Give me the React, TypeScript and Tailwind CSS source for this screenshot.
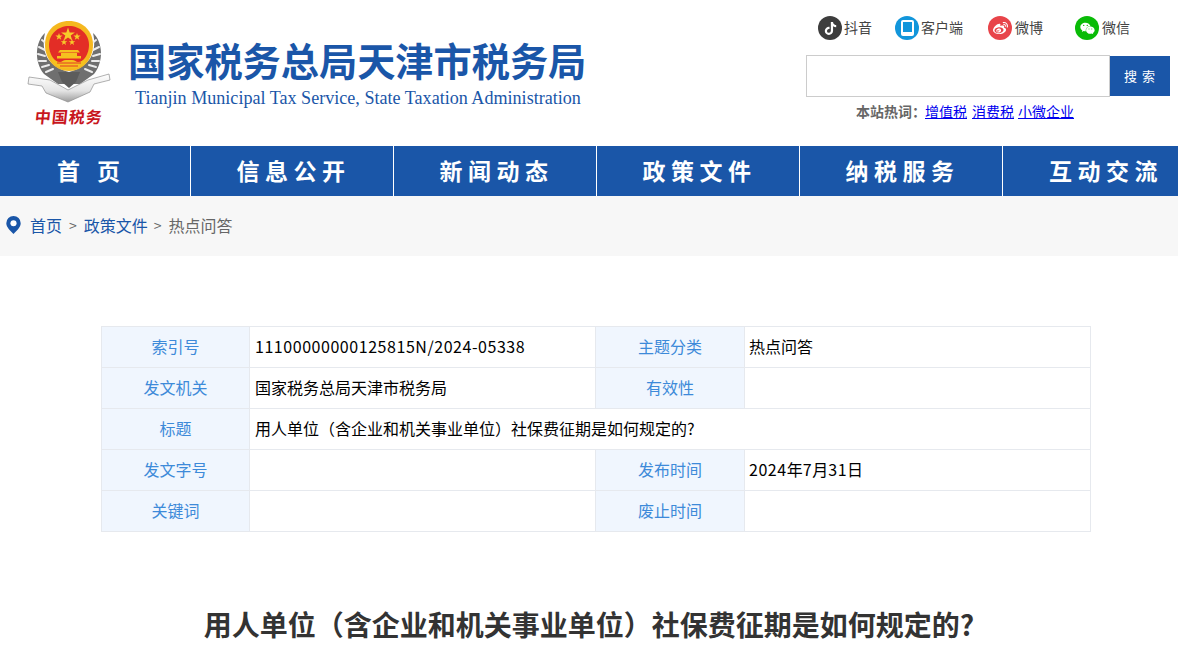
import React from "react";
import { FaTiktok, FaWeibo, FaWeixin } from "react-icons/fa";

const cjk = "font-['Microsoft_YaHei','Noto_Sans_CJK_SC',sans-serif]";

const navItems = ["信息公开", "新闻动态", "政策文件", "纳税服务", "互动交流"];

// coordinates in the viewBox are the picture's own, so the emblem parts are easy to compare
function Emblem() {
  return (
    <svg viewBox="26 21 86 82" className="w-[86px] h-[82px] shrink-0">
      <defs>
        <linearGradient id="silver" x1="0" y1="0" x2="0" y2="1">
          <stop offset="0" stopColor="#ffffff" />
          <stop offset="0.6" stopColor="#e4e4e4" />
          <stop offset="1" stopColor="#9c9c9c" />
        </linearGradient>
      </defs>
      {/* wreath */}
      <path d="M45 33 C35 42 34 62 44 74 L58 84 L80 84 L94 74 C104 62 103 42 93 33 C97 50 92 66 69 72 C46 66 41 50 45 33Z" fill="#6f6f6f" />
      <path d="M42 40 L47 44 M39 47 L45 50 M38 54 L45 56 M39 61 L46 61 M42 67 L49 65 M46 72 L53 69 M96 40 L91 44 M99 47 L93 50 M100 54 L93 56 M99 61 L92 61 M96 67 L89 65 M92 72 L85 69" stroke="#ececec" strokeWidth="2" strokeLinecap="round" />
      {/* ribbon */}
      <path d="M29 77 L50 80 L68 90 L88 80 L109 74 L110 80 L94 84 L90 92 L68 102 L46 93 L42 86 L28 84Z" fill="url(#silver)" stroke="#8f8f8f" strokeWidth="0.7" />
      {/* base under the shield */}
      <path d="M58 72 H80 L76 82 L69 88 L62 82Z" fill="#5c5c5c" />
      {/* shield */}
      <path d="M69 21 C83 21 93 31 93 45 C93 59 83 71 69 71 C55 71 45 59 45 45 C45 31 55 21 69 21Z" fill="#f5b81f" />
      <path d="M69 26 C80 26 89 34 89 45 C89 57 80 66 69 66 C58 66 49 57 49 45 C49 34 58 26 69 26Z" fill="#e32d26" />
      {/* stars */}
      <path d="M68 27.500 l1.700 5 5.200 0 -4.200 3.100 1.600 5 -4.300-3.100 -4.300 3.100 1.600-5 -4.200-3.100 5.200 0Z" fill="#f7cb2a" />
      <path d="M59 33 l.9 2.600 2.700 0 -2.200 1.600 .8 2.600 -2.200-1.600 -2.200 1.600 .8-2.600 -2.200-1.600 2.700 0Z M77 33 l.9 2.600 2.700 0 -2.200 1.600 .8 2.600 -2.200-1.600 -2.200 1.600 .8-2.600 -2.200-1.600 2.700 0Z" fill="#f7cb2a" />
      <path d="M64 39 l.8 2.300 2.400 0 -1.900 1.400 .7 2.300 -2-1.400 -2 1.400 .7-2.300 -1.900-1.400 2.400 0Z M72 39 l.8 2.300 2.400 0 -1.900 1.400 .7 2.300 -2-1.400 -2 1.400 .7-2.300 -1.900-1.400 2.400 0Z" fill="#f7cb2a" />
      {/* gate */}
      <path d="M60 50 H78 L80 52.500 H58Z M61 53 H77 V56 H81 V58.500 H57 V56 H61Z" fill="#f5c21f" />
      {/* waves along the bottom */}
      <path d="M51 58 C55 60 57 62 60 62 C62 62 63 60 66 60 H72 C75 60 76 62 78 62 C81 62 83 60 87 58 L84 65 L76 68 L62 68 L54 65Z" fill="#f5c21f" />
      <path d="M57 63 H81 M60 66 H78" stroke="#e32d26" strokeWidth="0.9" />
    </svg>
  );
}

function SocialLink({ bg, icon, label, className }: { bg: string; icon: React.ReactNode; label: string; className: string }) {
  return (
    <div className={`flex items-center gap-[2px] ${className}`}>
      <span className={`w-6 h-6 rounded-full flex items-center justify-center text-white ${bg}`}>{icon}</span>
      <span className="text-[14px] leading-6 text-[#444] pb-[2px]">{label}</span>
    </div>
  );
}

function Digits({ children }: { children: React.ReactNode }) {
  return <span className="tracking-[0.55px]">{children}</span>;
}

function MetaRow({ cells }: { cells: [string, React.ReactNode][] }) {
  return (
    <tr className="h-[41px]">
      {cells.map(([label, value], i) => (
        <React.Fragment key={label}>
          <td className="border border-[#e6e9ee] bg-[#f0f6fe] text-center text-[#3d8ad9] text-[16px] p-0 pb-[2px]">{label}</td>
          <td colSpan={cells.length === 1 ? 3 : 1} className={`border border-[#e6e9ee] text-black text-[16px] p-0 pb-[2px] ${i === 0 ? "pl-[5px]" : "pl-[4px]"}`}>{value}</td>
        </React.Fragment>
      ))}
    </tr>
  );
}

export default function App() {
  return (
    <div className={`h-screen overflow-hidden bg-white ${cjk}`}>
      <header className="h-[146px] flex">
        <div className="w-[806px] shrink-0 flex">
          <div className="w-[128px] shrink-0 pl-[26px] pt-[21px] flex flex-col">
            <Emblem />
            <span className="ml-[9px] mt-[2px] text-[#c8161d] text-[16px] leading-[22px] font-bold tracking-[1px] whitespace-nowrap -skew-x-6">中国税务</span>
          </div>
          <div className="pt-[36px]">
            <h1 className="text-[38.2px] leading-[48px] font-bold text-[#1a56a8] whitespace-nowrap">国家税务总局天津市税务局</h1>
            <p className="pl-[7px] mt-[2px] font-['Liberation_Serif',serif] text-[18.1px] leading-6 text-[#1a56a8] whitespace-nowrap">Tianjin Municipal Tax Service, State Taxation Administration</p>
          </div>
        </div>
        <div className="flex-1 pt-[16px]">
          <div className="flex h-6">
            <SocialLink className="ml-[12px] w-[77px]" bg="bg-[#3d3d3d]" icon={<FaTiktok size={13} />} label="抖音" />
            <SocialLink className="w-[93px]" bg="bg-[#1296db]" icon={<span className="w-[13px] h-[16px] bg-white rounded-[2px] flex items-start justify-center pt-[2px]"><span className="w-[9px] h-[10px] bg-[#1296db]" /></span>} label="客户端" />
            <SocialLink className="w-[87px] gap-[3px]" bg="bg-[#e8444a]" icon={<FaWeibo size={15} />} label="微博" />
            <SocialLink className="gap-[3px]" bg="bg-[#09bb07]" icon={<FaWeixin size={15} />} label="微信" />
          </div>
          <div className="flex mt-[15px]">
            <div className="w-[304px] h-[42px] border border-[#ccc] bg-white" />
            <button className="w-[60px] h-[40px] mt-px bg-[#1a56a8] text-white text-[13px] tracking-[1px]">搜 索</button>
          </div>
          <div className="mt-[4px] ml-[50px] text-[14px] leading-5 whitespace-nowrap">
            <span className="font-bold text-[#666]">本站热词：</span>
            <a className="text-[#00e] underline -ml-[1px]">增值税</a>
            <a className="text-[#00e] underline ml-[5px]">消费税</a>
            <a className="text-[#00e] underline ml-[4px]">小微企业</a>
          </div>
        </div>
      </header>

      <nav className="h-[50px] bg-[#1a56a8] flex -ml-[12px] w-[1230px]">
        <div className="w-[203px] shrink-0 flex items-center justify-center pl-[4px] pb-[2px] border-r border-white text-white text-[23px] font-bold tracking-[5px]">
          <span>首</span>
          <span className="ml-[12px]">页</span>
        </div>
        {navItems.map((item, i) => (
          <div key={item} className={`w-[203px] shrink-0 flex items-center justify-center pl-[3px] pb-[2px] text-white text-[23px] font-bold tracking-[5.5px] ${i < navItems.length - 1 ? "border-r border-white" : ""}`}>
            {item}
          </div>
        ))}
      </nav>

      <div className="h-[60px] bg-[#f7f7f7] flex items-center pl-[6px] pb-[2px] text-[16px]">
        <svg viewBox="0 0 16 20" className="w-[15px] h-[18px] mr-[9px]">
          <path d="M8 0a8 8 0 0 1 8 8c0 4.500-4.500 8.500-8 12C4.500 16.500 0 12.500 0 8a8 8 0 0 1 8-8Z" fill="#1a56a8" />
          <circle cx="8" cy="8" r="3.400" fill="#fff" />
        </svg>
        <span className="text-[#1a56a8]">首页</span>
        <span className="mx-[7px] text-[#666] text-[14px]">&gt;</span>
        <span className="text-[#1a56a8]">政策文件</span>
        <span className="ml-[6px] mr-[7px] text-[#666] text-[14px]">&gt;</span>
        <span className="text-[#666]">热点问答</span>
      </div>

      <main className="pt-[70px]">
        <table className="ml-[101px] w-[989px] table-fixed border-collapse">
          <colgroup>
            <col className="w-[148px]" />
            <col className="w-[346px]" />
            <col className="w-[149px]" />
            <col className="w-[346px]" />
          </colgroup>
          <tbody>
            <MetaRow cells={[["索引号", <Digits>11100000000125815N/2024-05338</Digits>], ["主题分类", "热点问答"]]} />
            <MetaRow cells={[["发文机关", "国家税务总局天津市税务局"], ["有效性", ""]]} />
            <MetaRow cells={[["标题", "用人单位（含企业和机关事业单位）社保费征期是如何规定的?"]]} />
            <MetaRow cells={[["发文字号", ""], ["发布时间", <><Digits>2024</Digits>年<Digits>7</Digits>月<Digits>31</Digits>日</>]]} />
            <MetaRow cells={[["关键词", ""], ["废止时间", ""]]} />
          </tbody>
        </table>
        <h2 className="mt-[72px] text-center text-[28px] leading-10 font-bold text-[#333]">用人单位（含企业和机关事业单位）社保费征期是如何规定的?</h2>
      </main>
    </div>
  );
}
